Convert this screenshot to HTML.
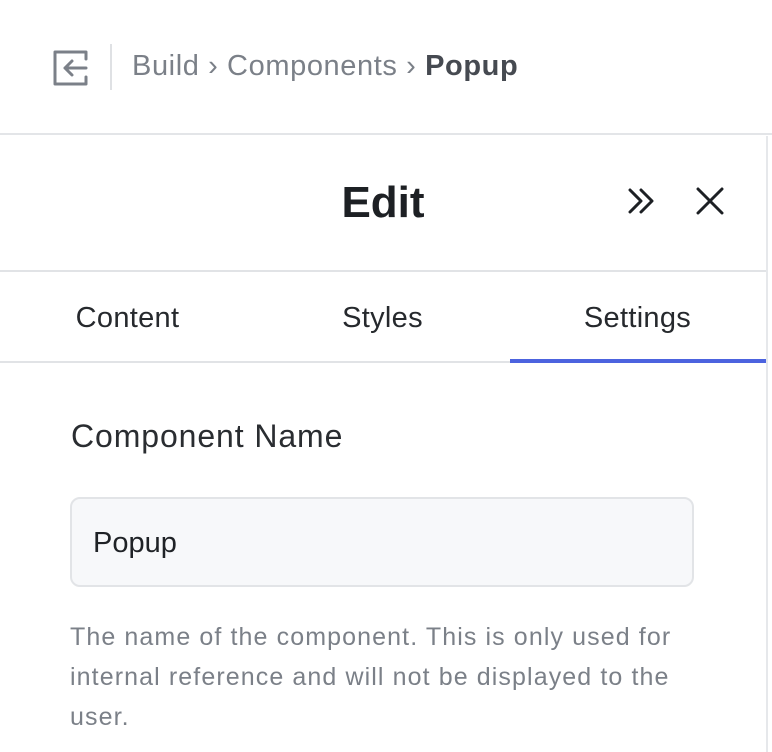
<!DOCTYPE html>
<html><head><meta charset="utf-8"><style>
*{margin:0;padding:0;box-sizing:border-box}
body{width:772px;height:752px;background:#fff;font-family:"Liberation Sans",sans-serif;position:relative;overflow:hidden;color:#1f2328}
.top{position:absolute;left:0;top:0;width:772px;height:135px;border-bottom:2px solid #e3e5e8}
.crumb{position:absolute;left:132px;top:50px;font-size:29px;letter-spacing:0.6px;color:#7b8088;white-space:nowrap}
.crumb b{color:#464a51;font-weight:bold}
.sep{position:absolute;left:110px;top:44px;width:2px;height:46px;background:#dfe1e4}
.vline{position:absolute;left:766px;top:136px;width:2px;height:616px;background:#e6e8eb}
.title{position:absolute;left:0;width:766px;top:178px;text-align:center;font-size:44px;font-weight:bold;color:#1d2024}
.hl{position:absolute;left:0;width:766px;height:2px;background:#e1e3e6}
.tab{position:absolute;top:302px;font-size:29px;letter-spacing:0.3px;color:#26292d;text-align:center;width:255px}
.lbl{position:absolute;left:71px;top:418px;font-size:32px;letter-spacing:0.9px;color:#2a2d31}
.inp{position:absolute;left:70px;top:497px;width:624px;height:90px;border:2px solid #e2e4e7;border-radius:10px;background:#f7f8fa}
.inp span{position:absolute;left:21px;top:28px;font-size:29px;color:#1f2226}
.help{position:absolute;left:70px;top:617px;width:640px;font-size:25px;letter-spacing:1.1px;line-height:40px;color:#7b8088}
</style></head><body>
<div class="top">
<svg style="position:absolute;left:52px;top:49px" width="38" height="38" viewBox="0 0 38 38" fill="none" stroke="#7b8088" stroke-width="3" stroke-linecap="round" stroke-linejoin="round"><path d="M34 10V3H3v32h31v-7"/><path d="M34 19H13M20 12l-7 7 7 7"/></svg>
<div class="sep"></div>
<div class="crumb">Build › Components › <b>Popup</b></div>
</div>
<div class="vline"></div>
<div class="title">Edit</div>
<svg style="position:absolute;left:627px;top:187px" width="30" height="28" viewBox="0 0 30 28" fill="none" stroke="#1d2024" stroke-width="3" stroke-linecap="round" stroke-linejoin="round"><path d="M3 3l11 11L3 25M14 3l11 11-11 11"/></svg>
<svg style="position:absolute;left:696px;top:187px" width="28" height="28" viewBox="0 0 28 28" fill="none" stroke="#1d2024" stroke-width="3" stroke-linecap="round"><path d="M2 2l24 24M26 2L2 26"/></svg>
<div class="hl" style="top:270px"></div>
<div class="tab" style="left:0">Content</div>
<div class="tab" style="left:255px">Styles</div>
<div class="tab" style="left:510px">Settings</div>
<div class="hl" style="top:361px"></div>
<div style="position:absolute;left:510px;top:359px;width:256px;height:4px;background:#4c63df"></div>
<div class="lbl">Component Name</div>
<div class="inp"><span>Popup</span></div>
<div class="help">The name of the component. This is only used for internal reference and will not be displayed to the user.</div>
</body></html>
